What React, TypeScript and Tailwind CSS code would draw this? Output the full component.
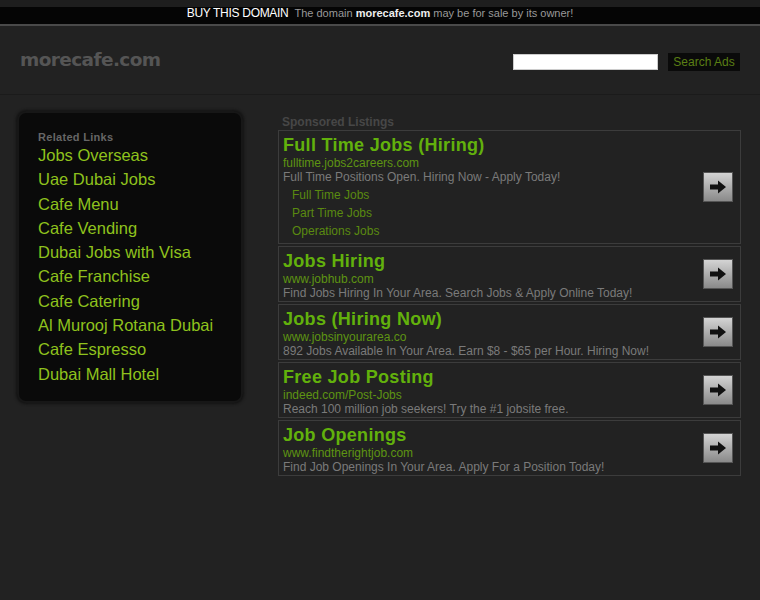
const RELATED = [
  'Jobs Overseas',
  'Uae Dubai Jobs',
  'Cafe Menu',
  'Cafe Vending',
  'Dubai Jobs with Visa',
  'Cafe Franchise',
  'Cafe Catering',
  'Al Murooj Rotana Dubai',
  'Cafe Espresso',
  'Dubai Mall Hotel',
]

type Ad = { title: string; url: string; desc: string; subs?: string[] }

const ADS: Ad[] = [
  {
    title: 'Full Time Jobs (Hiring)',
    url: 'fulltime.jobs2careers.com',
    desc: 'Full Time Positions Open. Hiring Now - Apply Today!',
    subs: ['Full Time Jobs', 'Part Time Jobs', 'Operations Jobs'],
  },
  {
    title: 'Jobs Hiring',
    url: 'www.jobhub.com',
    desc: 'Find Jobs Hiring In Your Area. Search Jobs & Apply Online Today!',
  },
  {
    title: 'Jobs (Hiring Now)',
    url: 'www.jobsinyourarea.co',
    desc: '892 Jobs Available In Your Area. Earn $8 - $65 per Hour. Hiring Now!',
  },
  {
    title: 'Free Job Posting',
    url: 'indeed.com/Post-Jobs',
    desc: 'Reach 100 million job seekers! Try the #1 jobsite free.',
  },
  {
    title: 'Job Openings',
    url: 'www.findtherightjob.com',
    desc: 'Find Job Openings In Your Area. Apply For a Position Today!',
  },
]

function ArrowButton() {
  return (
    <div className="w-[30px] h-[30px] shrink-0 flex items-center justify-center border border-[#555] bg-gradient-to-b from-[#d4d4d4] to-[#8a8a8a]">
      <svg width="18" height="14" viewBox="0 0 18 14">
        <path d="M1 4.5h8V0.5l8 6.5-8 6.5V9.5H1z" fill="#111" />
      </svg>
    </div>
  )
}

export default function App() {
  return (
    <div className="min-h-screen bg-[#222222] font-['Liberation_Sans',Arial,sans-serif]">
      {/* domain bar */}
      <div className="h-[7px] bg-[#1e1e1e]" />
      <div className="h-[17px] bg-[#050505] flex items-start justify-center leading-[12px]">
        <span className="text-white text-[12px] tracking-[-0.3px]">BUY THIS DOMAIN</span>
        <span className="text-[#999] text-[11px] ml-[6px] leading-[12px]">
          The domain <b className="text-[#eee]">morecafe.com</b> may be for sale by its owner!
        </span>
      </div>
      <div className="h-[2px] bg-[#4a4a4a]" />

      {/* header */}
      <div className="h-[69px] border-b border-[#1b1b1b] flex items-center justify-between pl-[20px] pr-[20px]">
        <div className="text-[#555] text-[18.5px] font-bold font-['DejaVu_Sans',Verdana,sans-serif] tracking-[-0.6px]">
          morecafe.com
        </div>
        <div className="flex items-center gap-[10px] mt-[3px]">
          <div className="w-[145px] h-[16px] bg-white border border-[#ccc]" />
          <div className="w-[72px] h-[18px] bg-[#0a0a0a] text-[#5a7f14] text-[12px] flex items-center justify-center">
            Search Ads
          </div>
        </div>
      </div>

      {/* content */}
      <div className="flex items-start pt-[16px]">
        <div className="ml-[17px] w-[226px] h-[292px] rounded-[9px] bg-[#0a0a0a] border-2 border-[#171717] shadow-[0_0_3px_1px_#111] pt-[18px] pl-[19px]">
          <div className="text-[#666] text-[11px] font-bold tracking-[0.3px] leading-[13px]">Related Links</div>
          <div className="flex flex-col -mt-[1px]">
            {RELATED.map(r => (
              <div key={r} className="text-[#8fc21d] text-[16.5px] leading-[24.3px]">
                {r}
              </div>
            ))}
          </div>
        </div>

        <div className="ml-[35px] w-[463px]">
          <div className="text-[#474747] text-[12px] font-bold leading-[14px] pl-[4px] mt-[4px] mb-[1px]">Sponsored Listings</div>
          <div className="flex flex-col gap-[2px]">
            {ADS.map(ad => (
              <div key={ad.title} className="border border-[#3c3c3c] flex items-center justify-between pl-[4px] pr-[7px]">
                <div className="flex flex-col pt-[3px] pb-[1px]">
                  <div className="text-[#62b10c] text-[18px] leading-[22px] font-bold tracking-[0.3px]">{ad.title}</div>
                  <div className="text-[#5e9412] text-[12px] leading-[14px]">{ad.url}</div>
                  <div className="text-[#7a7a7a] text-[12px] leading-[14px]">{ad.desc}</div>
                  {ad.subs && (
                    <div className="flex flex-col pl-[9px] pt-[2px] pb-[2px]">
                      {ad.subs.map(s => (
                        <div key={s} className="text-[#5a8a10] text-[12px] leading-[18px]">{s}</div>
                      ))}
                    </div>
                  )}
                </div>
                <ArrowButton />
              </div>
            ))}
          </div>
        </div>
      </div>
    </div>
  )
}
